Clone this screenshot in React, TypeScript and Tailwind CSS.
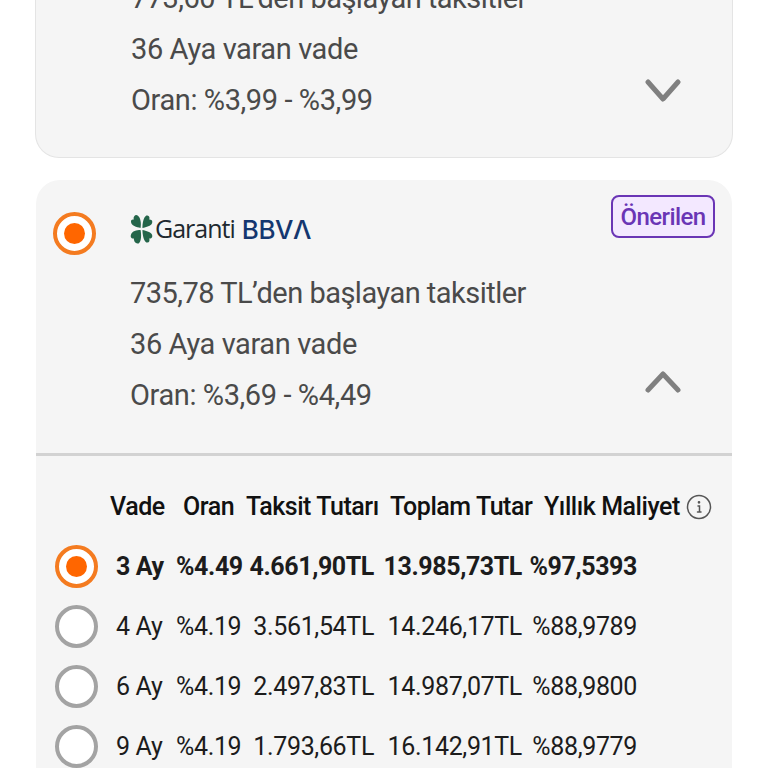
const rows = [
  { vade: "3 Ay", oran: "%4.49", taksit: "4.661,90TL", toplam: "13.985,73TL", maliyet: "%97,5393", selected: true },
  { vade: "4 Ay", oran: "%4.19", taksit: "3.561,54TL", toplam: "14.246,17TL", maliyet: "%88,9789", selected: false },
  { vade: "6 Ay", oran: "%4.19", taksit: "2.497,83TL", toplam: "14.987,07TL", maliyet: "%88,9800", selected: false },
  { vade: "9 Ay", oran: "%4.19", taksit: "1.793,66TL", toplam: "16.142,91TL", maliyet: "%88,9779", selected: false },
];

const Radio = ({ selected }: { selected: boolean }) =>
  selected ? (
    <div className="w-[43px] h-[43px] rounded-full border-[4px] border-[#f47b20] bg-white flex items-center justify-center shrink-0">
      <div className="w-[21px] h-[21px] rounded-full bg-[#ff6600]" />
    </div>
  ) : (
    <div className="w-[43px] h-[43px] rounded-full border-[4px] border-[#a3a3a3] bg-white shrink-0" />
  );

const Chevron = ({ up }: { up: boolean }) => (
  <svg width="36" height="24" viewBox="0 0 36 24" fill="none" stroke="#808080" strokeWidth="5" strokeLinecap="round" strokeLinejoin="round">
    <path d={up ? "M3 21 L18 5 L33 21" : "M3 3 L18 20 L33 3"} />
  </svg>
);

const Clover = () => (
  <svg width="23" height="32" viewBox="0 0 24 32" fill="#24654a">
    <path d="M11 15 C7 14 1 13 1 8 C1 6 3 6 4 6 C3 3 6 0 8 2 C11 4 12 10 11 15Z" />
    <path d="M13 15 C13 10 14 4 17 2 C20 1 21 4 20 6 C22 6 24 7 23 10 C22 13 17 14 13 15Z" />
    <path d="M11 17 C7 17 2 18 1 22 C0 25 2 26 4 26 C4 29 6 32 9 31 C12 29 12 22 11 17Z" />
    <path d="M13 17 C13 21 14 28 17 30 C20 31 21 28 20 26 C22 26 24 25 23 22 C22 19 17 18 13 17Z" />
  </svg>
);

export default function App() {
  return (
    <div className="h-[768px] overflow-hidden bg-white font-['Roboto',sans-serif]">
      {/* previous bank, scrolled off the top */}
      <div className="mx-[35px] h-[158px] flex flex-col justify-end rounded-b-[24px] bg-[#f5f5f5] border border-t-0 border-[#e4e4e4] pl-[95px] pr-[51px] pb-[31px] text-[29px] tracking-[-0.4px] leading-[51px] text-[#4a4a4a]">
        <div className="-mt-[30px] whitespace-nowrap tracking-[-0.52px]">773,60 TL’den başlayan taksitler</div>
        <div>36 Aya varan vade</div>
        <div className="flex items-center justify-between">
          <span>Oran: %3,99 - %3,99</span>
          <span className="-mt-[20px]"><Chevron up={false} /></span>
        </div>
      </div>

      {/* selected bank */}
      <div className="mx-[36px] mt-[22px] rounded-t-[24px] bg-[#f5f5f5] h-[276px] border-b-[3px] border-[#d2d2d2] px-[17px] pt-[15px]">
        <div className="flex h-[74px]">
          <div className="mt-[17px]"><Radio selected /></div>
          <div className="ml-[34px] mt-[18px] h-[32px] flex items-center">
            <Clover />
            <span className="ml-[2px] font-['Open_Sans',sans-serif] text-[25px] tracking-[-1px] text-[#20282e]">Garanti</span>
            <span className="ml-[7px] font-['Inter',sans-serif] font-medium text-[26px] tracking-[-0.4px] text-[#14376f]">BBVΛ</span>
          </div>
          <div className="ml-auto self-start w-[104px] h-[43px] flex items-center justify-center rounded-[8px] border-2 border-[#6a35b5] bg-[#f3e8ff] text-[24px] tracking-[-0.6px] font-medium text-[#6a35b5]">
            Önerilen
          </div>
        </div>
        <div className="pl-[77px] text-[29px] tracking-[-0.4px] leading-[51px] text-[#4a4a4a]">
          <div className="-mt-[1px] tracking-[-0.52px]">735,78 TL’den başlayan taksitler</div>
          <div>36 Aya varan vade</div>
          <div className="flex items-center justify-between pr-[34px]">
            <span>Oran: %3,69 - %4,49</span>
            <span className="-mt-[30px]"><Chevron up /></span>
          </div>
        </div>
      </div>

      {/* installment table */}
      <div className="mx-[36px] bg-[#f5f5f5] h-[400px] pt-[34px]">
        <div className="flex items-center h-[33px] pl-[74px] text-[25px] tracking-[-0.45px] font-medium text-[#111111] whitespace-nowrap">
          <span className="w-[73px]">Vade</span>
          <span className="w-[63px]">Oran</span>
          <span className="w-[144px]">Taksit Tutarı</span>
          <span className="w-[154px]">Toplam Tutar</span>
          <span>Yıllık Maliyet</span>
          <svg className="ml-[6px]" width="26" height="26" viewBox="0 0 26 26" fill="none" stroke="#555555" strokeWidth="1.5">
            <circle cx="13" cy="13" r="11.5" />
            <path d="M12 12h1.5v6M11.5 18h3.5" strokeLinecap="round" />
            <circle cx="13" cy="8.3" r="0.6" fill="#555555" />
          </svg>
        </div>
        <div className="mt-[22px] flex flex-col gap-[17px]">
          {rows.map((r) => (
            <div
              key={r.vade}
              className={`flex items-center h-[43px] pl-[19px] text-[25px] whitespace-nowrap text-[#1c1c1c] ${r.selected ? "font-bold tracking-[-0.4px]" : "tracking-[-0.35px]"}`}
            >
              <Radio selected={r.selected} />
              <span className="ml-[18px] w-[60px]">{r.vade}</span>
              <span className="w-[65px] text-right">{r.oran}</span>
              <span className="w-[133px] text-right">{r.taksit}</span>
              <span className="w-[148px] text-right">{r.toplam}</span>
              <span className="w-[115px] text-right">{r.maliyet}</span>
            </div>
          ))}
        </div>
      </div>
    </div>
  );
}
